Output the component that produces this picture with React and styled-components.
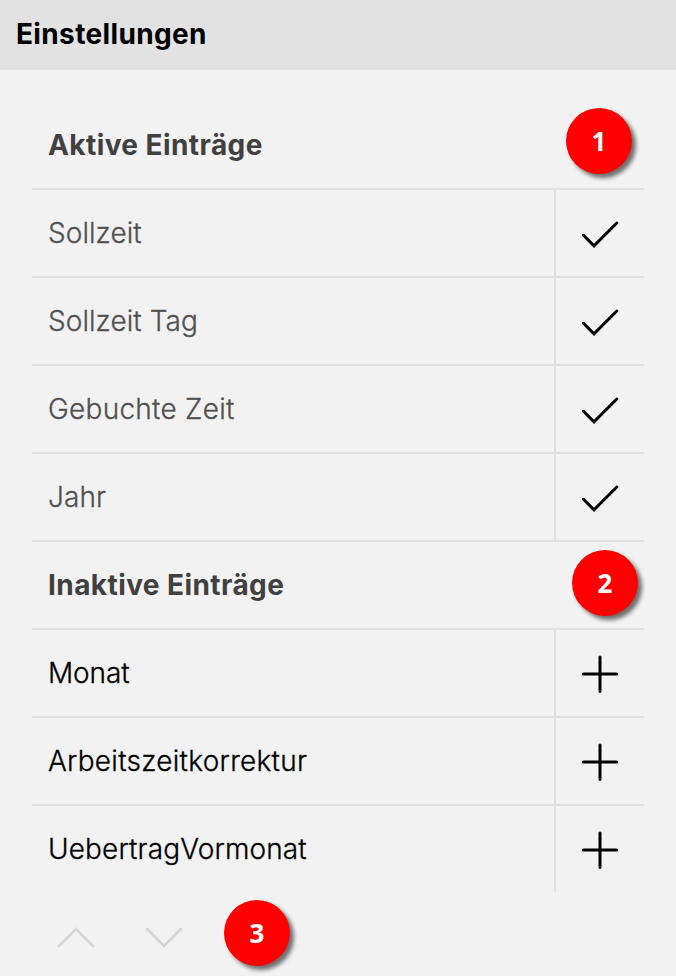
import React from "react";
import styled, { createGlobalStyle } from "styled-components";

const GlobalStyle = createGlobalStyle`
  *, *::before, *::after { box-sizing: border-box; }
  body {
    margin: 0;
    background: #f2f2f2;
    font-family: Inter, sans-serif;
    font-size: 28px;
    font-weight: 300;
  }
`;

const Page = styled.main`
  position: relative;
  width: 676px;
  height: 976px;
  overflow: hidden;
  display: flex;
  flex-direction: column;
  background: #f2f2f2;
`;

const Header = styled.header`
  flex: none;
  height: 70px;
  padding: 0 16px 2px;
  display: flex;
  align-items: center;
  background: #e2e2e2;
`;

const Title = styled.h1`
  margin: 0;
  font-size: 28px;
  line-height: 36px;
  font-weight: 700;
  letter-spacing: 0.36px;
  color: #000;
`;

const List = styled.div`
  margin: 32px 32px 0;
  display: flex;
  flex-direction: column;
`;

const SectionTitle = styled.h2`
  margin: 0;
  height: 88px;
  padding: 0 16px;
  border-bottom: 2px solid #e0e0e0;
  font-size: 28px;
  line-height: 86px;
  font-weight: 700;
  letter-spacing: 0.42px;
  color: #404040;
`;

const Row = styled.div`
  height: 88px;
  display: grid;
  grid-template-columns: 1fr 90px;
  border-bottom: 2px solid ${({ $last }) => ($last ? "transparent" : "#e0e0e0")};
`;

const Label = styled.span`
  padding-left: 16px;
  line-height: 86px;
  letter-spacing: ${({ $tracking }) => $tracking}px;
  color: ${({ $muted }) => ($muted ? "#505050" : "#000")};
  -webkit-text-stroke: 0.3px currentColor;
`;

const Action = styled.button`
  display: flex;
  align-items: center;
  justify-content: center;
  padding: 0;
  border: 0;
  border-left: 2px solid #e0e0e0;
  background: none;
  color: #000;
`;

const Toolbar = styled.div`
  display: flex;
  margin-left: 32px;
`;

const ToolButton = styled.button`
  width: 88px;
  height: 88px;
  display: flex;
  align-items: center;
  justify-content: center;
  padding: 0;
  border: 0;
  background: none;
  color: #d3d3d3;
`;

const Glyph = styled.svg`
  display: block;
  flex: none;
  fill: none;
  stroke: currentColor;
  stroke-width: ${({ $weight }) => $weight || 3};
  stroke-linecap: round;
  stroke-linejoin: miter;
`;

const Badge = styled.span`
  position: absolute;
  left: ${({ $x }) => $x}px;
  top: ${({ $y }) => $y}px;
  width: 66px;
  height: 66px;
  border-radius: 50%;
  background: #f00;
  box-shadow: 4px 4px 4px rgba(0, 0, 0, 0.55);
  color: #fff;
  font: 700 26px/66px "Open Sans", sans-serif;
  text-align: center;
`;

const Icon = ({ d, weight }) => (
  <Glyph width="44" height="44" viewBox="0 0 44 44" $weight={weight} aria-hidden="true">
    <path d={d} />
  </Glyph>
);

const icons = {
  check: "M5.5 24.3L16 34.8L38.8 12",
  plus: "M22 6V40.5M5.5 23H38.5",
  up: "M5 30L22 13L39 30",
  down: "M5 13L22 30L39 13",
};

const active = [
  { name: "Sollzeit", tracking: 0.06 },
  { name: "Sollzeit Tag", tracking: 0.06 },
  { name: "Gebuchte Zeit", tracking: 0.26 },
  { name: "Jahr", tracking: 0.1 },
];

const inactive = [
  { name: "Monat", tracking: -0.1 },
  { name: "Arbeitszeitkorrektur", tracking: 0.27 },
  { name: "UebertragVormonat", tracking: 0.12 },
];

export default function App() {
  return (
    <>
      <GlobalStyle />
      <Page>
        <Header>
          <Title>Einstellungen</Title>
        </Header>
        <List>
          <SectionTitle>Aktive Einträge</SectionTitle>
          {active.map(({ name, tracking }) => (
            <Row key={name}>
              <Label $muted $tracking={tracking}>{name}</Label>
              <Action aria-label={`${name} entfernen`}>
                <Icon d={icons.check} />
              </Action>
            </Row>
          ))}
          <SectionTitle>Inaktive Einträge</SectionTitle>
          {inactive.map(({ name, tracking }, i) => (
            <Row key={name} $last={i === inactive.length - 1}>
              <Label $tracking={tracking}>{name}</Label>
              <Action aria-label={`${name} hinzufügen`}>
                <Icon d={icons.plus} />
              </Action>
            </Row>
          ))}
        </List>
        <Toolbar>
          <ToolButton aria-label="Nach oben">
            <Icon d={icons.up} weight={2.5} />
          </ToolButton>
          <ToolButton aria-label="Nach unten">
            <Icon d={icons.down} weight={2.5} />
          </ToolButton>
        </Toolbar>
        <Badge $x={566} $y={108}>1</Badge>
        <Badge $x={572} $y={550}>2</Badge>
        <Badge $x={224} $y={900}>3</Badge>
      </Page>
    </>
  );
}
